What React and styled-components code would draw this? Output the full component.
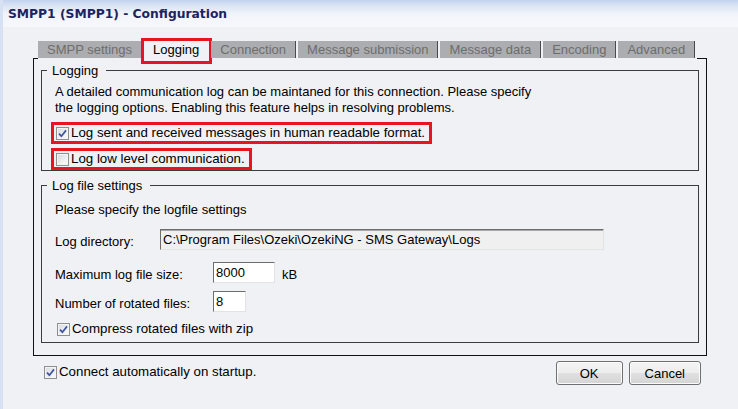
import React from 'react';
import styled, { createGlobalStyle } from 'styled-components';

const GlobalStyle = createGlobalStyle`
  html, body {
    margin: 0;
    padding: 0;
    background: #eff1f5;
  }
  body {
    font-family: 'Liberation Sans', Arial, sans-serif;
    font-size: 13px;
    color: #000;
  }
`;

const Window = styled.div`
  width: 735px;
  height: 409px;
  border-left: 3px solid #d6e1f3;
  background: #eff1f5;
  display: flex;
  flex-direction: column;
  overflow: hidden;
`;

const TitleBar = styled.div`
  height: 27px;
  flex-shrink: 0;
  display: flex;
  align-items: center;
  padding-left: 5px;
  background: linear-gradient(to bottom, #c3d2ee 0px, #dce5f5 6px, #f1f4fa 14px, #f7f8fc 27px);
  font-family: 'DejaVu Sans', Verdana, sans-serif;
  font-weight: bold;
  font-size: 12.3px;
  color: #1c2460;
`;

const Body = styled.div`
  width: 674px;
  padding: 14px 0 0 30px;
  display: flex;
  flex-direction: column;
`;

const TabRow = styled.div`
  align-self: flex-start;
  display: flex;
  align-items: flex-start;
  height: 18px;
  margin-left: 5px;
  margin-bottom: -1px;
  background: #eff1f5;
  position: relative;
  z-index: 1;
`;

const Tab = styled.div`
  height: ${(p) => (p.$active ? '20px' : '17px')};
  line-height: 17px;
  padding: 0 9px;
  margin-right: 2px;
  white-space: nowrap;
  background: ${(p) => (p.$active ? '#eff1f5' : '#acadb1')};
  color: ${(p) => (p.$active ? '#000' : '#6d6d6d')};
  border-right: 1px solid ${(p) => (p.$active ? 'transparent' : '#4a4a4a')};
  outline: ${(p) => (p.$highlight ? '3px solid #e8141f' : 'none')};
`;

const Panel = styled.div`
  border: 1px solid #111;
  padding: 4px 7px 12px 7px;
  display: flex;
  flex-direction: column;
`;

const Group = styled.fieldset`
  margin: ${(p) => p.$top || 0}px 0 0 0;
  border: 1px solid #3c3c3c;
  padding: ${(p) => p.$padTop}px 8px ${(p) => p.$padBottom}px 13px;
  min-width: 0;
`;

const Legend = styled.legend`
  padding: 0 8px 0 5px;
  margin-left: -8px;
  line-height: 15px;
  font-size: 13px;
`;

const GroupBody = styled.div`
  display: flex;
  flex-direction: column;
  align-items: flex-start;
`;

const Text = styled.p`
  margin: 0;
  line-height: 16px;
`;

const CheckRow = styled.label`
  display: inline-flex;
  align-items: center;
  gap: 2px;
  line-height: 14px;
  font-size: 13.3px;
  margin-top: ${(p) => p.$top || 0}px;
  border: ${(p) => (p.$highlight ? '3px solid #e8141f' : 'none')};
  padding: ${(p) => (p.$highlight ? '1px 4px 1px 2px' : '0 0 0 2px')};
  margin-left: ${(p) => (p.$highlight ? '-4px' : '0')};
`;

const Box = styled.span`
  width: 13px;
  height: 13px;
  box-sizing: border-box;
  border: 1px solid #8e8f8f;
  background: linear-gradient(135deg, #d6d9de 0%, #eef0f3 60%, #fbfbfb 100%);
  box-shadow: inset 0 0 0 1px #f4f4f4;
  display: inline-flex;
  align-items: center;
  justify-content: center;
  flex-shrink: 0;
`;

const Checkbox = ({ checked }) => (
  <Box>
    {checked && (
      <svg width="11" height="11" viewBox="0 0 11 11">
        <path d="M2 5.6 L4.4 8.2 L9 2.4" fill="none" stroke="#3f55a2" strokeWidth="1.7" />
      </svg>
    )}
  </Box>
);

const FormRow = styled.div`
  display: flex;
  align-items: center;
  margin-top: ${(p) => p.$top}px;
`;

const FieldLabel = styled.span`
  width: ${(p) => p.$width}px;
  padding-top: 5px;
  line-height: 16px;
  flex-shrink: 0;
`;

const Input = styled.div`
  width: ${(p) => p.$width}px;
  height: 21px;
  box-sizing: border-box;
  padding: 0 2px;
  line-height: 19px;
  white-space: nowrap;
  overflow: hidden;
  background: ${(p) => (p.$disabled ? '#f0f0f0' : '#fff')};
  border-style: solid;
  border-width: 1px;
  border-color: #6d6d6d #e3e3e3 #e3e3e3 #6d6d6d;
  box-shadow: ${(p) => (p.$disabled ? 'inset 0 1px 0 #a8a8a8' : 'none')};
`;

const Unit = styled.span`
  margin-left: 7px;
  padding-top: 3px;
`;

const Footer = styled.div`
  display: flex;
  justify-content: space-between;
  align-items: flex-start;
  padding: 5px 6px 0 9px;
`;

const Buttons = styled.div`
  display: flex;
  gap: 6px;
`;

const Button = styled.button`
  min-width: 67px;
  height: 24px;
  padding: 0 15px;
  font-family: 'Liberation Sans', Arial, sans-serif;
  font-size: 13px;
  color: #000;
  border: 1px solid #707070;
  border-radius: 3px;
  background: linear-gradient(to bottom, #f4f4f4 0%, #ededed 50%, #e0e0e0 51%, #d4d4d4 100%);
  box-shadow: inset 0 0 0 1px #fbfbfb;
`;

const tabs = ['SMPP settings', 'Logging', 'Connection', 'Message submission', 'Message data', 'Encoding', 'Advanced'];

export default function App() {
  return (
    <>
      <GlobalStyle />
      <Window>
        <TitleBar>SMPP1 (SMPP1) - Configuration</TitleBar>
        <Body>
          <TabRow>
            {tabs.map((t) => (
              <Tab key={t} $active={t === 'Logging'} $highlight={t === 'Logging'}>
                {t}
              </Tab>
            ))}
          </TabRow>
          <Panel>
            <Group $padTop={6} $padBottom={0}>
              <Legend>Logging</Legend>
              <GroupBody>
                <Text>
                  A detailed communication log can be maintaned for this connection. Please specify
                  <br />
                  the logging options. Enabling this feature helps in resolving problems.
                </Text>
                <CheckRow $highlight $top={6}>
                  <Checkbox checked />
                  Log sent and received messages in human readable format.
                </CheckRow>
                <CheckRow $highlight $top={4}>
                  <Checkbox />
                  Log low level communication.
                </CheckRow>
              </GroupBody>
            </Group>
            <Group $top={7} $padTop={9} $padBottom={6}>
              <Legend>Log file settings</Legend>
              <GroupBody>
                <Text>Please specify the logfile settings</Text>
                <FormRow $top={11}>
                  <FieldLabel $width={105}>Log directory:</FieldLabel>
                  <Input $width={444} $disabled>C:\Program Files\Ozeki\OzekiNG - SMS Gateway\Logs</Input>
                </FormRow>
                <FormRow $top={12}>
                  <FieldLabel $width={158}>Maximum log file size:</FieldLabel>
                  <Input $width={62}>8000</Input>
                  <Unit>kB</Unit>
                </FormRow>
                <FormRow $top={8}>
                  <FieldLabel $width={158}>Number of rotated files:</FieldLabel>
                  <Input $width={33}>8</Input>
                </FormRow>
                <CheckRow $top={10}>
                  <Checkbox checked />
                  Compress rotated files with zip
                </CheckRow>
              </GroupBody>
            </Group>
          </Panel>
          <Footer>
            <CheckRow $top={4}>
              <Checkbox checked />
              Connect automatically on startup.
            </CheckRow>
            <Buttons>
              <Button>OK</Button>
              <Button>Cancel</Button>
            </Buttons>
          </Footer>
        </Body>
      </Window>
    </>
  );
}
